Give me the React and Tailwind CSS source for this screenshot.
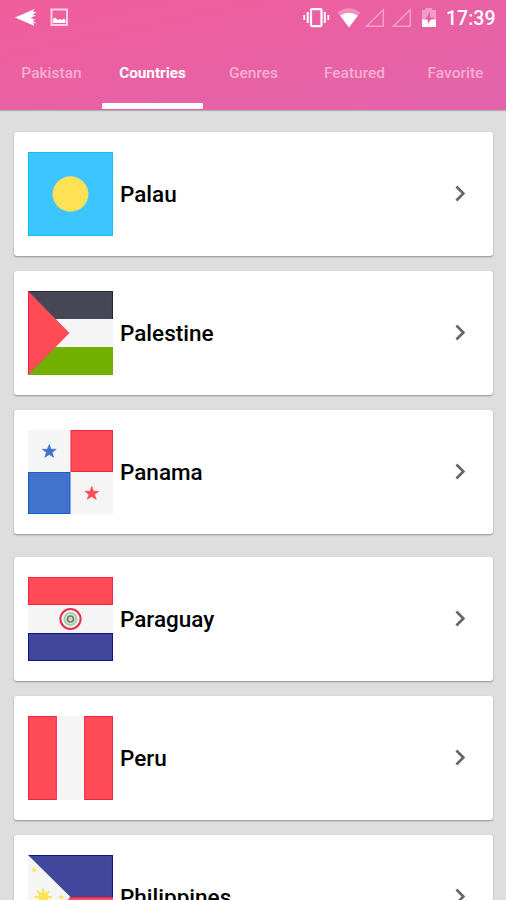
const TABS = ['Pakistan', 'Countries', 'Genres', 'Featured', 'Favorite']

const STAR = '0,-7 1.7,-2.2 6.8,-2.2 2.8,0.9 4.3,5.8 0,2.9 -4.3,5.8 -2.8,0.9 -6.8,-2.2 -1.7,-2.2'

const FLAGS = {
  palau: (
    <>
      <rect x="0.5" y="0.5" width="83" height="83" fill="#3cc5ff" stroke="#10bff8" />
      <circle cx="42" cy="42" r="17.7" fill="#ffe155" />
    </>
  ),
  palestine: (
    <>
      <rect width="84" height="84" fill="#f5f5f5" />
      <rect width="84" height="28" fill="#464655" />
      <path d="M0 .5H83.5V28" fill="none" stroke="#28243f" />
      <rect y="56" width="84" height="28" fill="#73af00" />
      <path d="M0 0L41 42L0 84Z" fill="#ff4b55" />
      <path d="M.5 0V84" stroke="#f51c45" />
    </>
  ),
  panama: (
    <>
      <rect width="84" height="84" fill="#f5f5f5" />
      <rect x="42.5" y="0.5" width="41" height="41" fill="#ff4b55" stroke="#f42248" />
      <rect x="0.5" y="42.5" width="41" height="41" fill="#4173cd" stroke="#1760c8" />
      <polygon points={STAR} transform="translate(21 21.5)" fill="#4173cd" stroke="#4173cd" strokeWidth=".7" />
      <polygon points={STAR} transform="translate(63 63.5)" fill="#ff4b55" stroke="#ff4b55" strokeWidth=".7" />
    </>
  ),
  paraguay: (
    <>
      <rect width="84" height="84" fill="#f5f5f5" />
      <rect x="0.5" y="0.5" width="83" height="27" fill="#ff4b55" stroke="#f42248" />
      <rect x="0.5" y="56.5" width="83" height="27" fill="#41479b" stroke="#101488" />
      <circle cx="42" cy="42" r="10" fill="#f5f5f5" stroke="#e8304a" strokeWidth="2" />
      <circle cx="42" cy="42" r="6" fill="#d4e8d8" stroke="#a5d3b0" strokeWidth="2" />
      <circle cx="42" cy="42" r="3" fill="#f5d76a" stroke="#65749a" strokeWidth="1.6" />
    </>
  ),
  peru: (
    <>
      <rect width="84" height="84" fill="#f5f5f5" />
      <rect x="0.5" y="0.5" width="27.5" height="83" fill="#ff4b55" stroke="#f42248" />
      <rect x="56" y="0.5" width="27.5" height="83" fill="#ff4b55" stroke="#f42248" />
    </>
  ),
  philippines: (
    <>
      <rect width="84" height="84" fill="#f5f5f5" />
      <path d="M0 0H84V42H42Z" fill="#41479b" />
      <path d="M1 .5H83.5V42" fill="none" stroke="#101488" />
      <path d="M42 42H84V84H0Z" fill="#ff4b55" />
      <path d="M41 42.5H84" stroke="#f42248" />
      <circle cx="15" cy="42" r="5" fill="#ffe155" />
      <path
        d="M15 33.5V50.5M6.5 42H23.5M9 36L21 48M21 36L9 48"
        stroke="#ffe155"
        strokeWidth="2"
      />
      <polygon points={STAR} transform="translate(6 15) scale(.43)" fill="#ffe155" />
      <polygon points={STAR} transform="translate(33 42) scale(.43)" fill="#ffe155" />
    </>
  ),
}

const COUNTRIES = [
  { name: 'Palau', flag: 'palau' },
  { name: 'Palestine', flag: 'palestine' },
  { name: 'Panama', flag: 'panama', last: true },
  { name: 'Paraguay', flag: 'paraguay' },
  { name: 'Peru', flag: 'peru' },
  { name: 'Philippines', flag: 'philippines' },
]

function StatusBar() {
  return (
    <div className="flex h-9 items-center justify-between pl-[15px] pr-[10px] text-white">
      <div className="flex items-center gap-[13px]">
        <svg width="22" height="20" viewBox="0 0 22 20" fill="currentColor">
          <path d="M0 9.5L19.5 1L18 4L21.5 4L17.5 7L21 7.5L15.5 10L21 12L17.5 12.5L21.5 15.5L18 15L19.5 18Z" />
        </svg>
        <svg width="19" height="20" viewBox="0 0 19 20">
          <rect x="1.5" y="1.5" width="15.5" height="15.5" fill="none" stroke="#ffd0e5" strokeWidth="2" />
          <path d="M3 15V11L5 9.5L8 12L10 11L12 12L14 10.5L15.5 12V15Z" fill="currentColor" />
        </svg>
      </div>
      <div className="flex items-center">
        <svg width="27" height="22" viewBox="0 0 27 22" fill="none" stroke="currentColor">
          <rect x="8" y="2.1" width="10.5" height="17" rx="1" strokeWidth="2.2" />
          <path d="M4.7 5V16M21.8 5V16" strokeWidth="2" />
          <path d="M1.2 8V13M25.3 8V13" strokeWidth="1.8" />
        </svg>
        <svg className="ml-[7px]" width="24" height="22" viewBox="0 0 24 22" fill="currentColor">
          <path d="M.5 5.5Q12 -3 23.5 5.5L12 20.5Z" opacity=".3" />
          <path d="M3.2 8.6Q12 2.8 20.8 8.6L12 20.5Z" />
        </svg>
        <svg className="ml-[4px]" width="20" height="22" viewBox="0 0 20 22" fill="none">
          <path d="M1.5 19.2L18.3 2.8V19.2Z" stroke="#fff" strokeOpacity=".4" strokeWidth="1.5" />
        </svg>
        <svg className="ml-[7px]" width="20" height="22" viewBox="0 0 20 22" fill="none">
          <path d="M1.5 19.2L18.3 2.8V19.2Z" stroke="#fff" strokeOpacity=".4" strokeWidth="1.5" />
        </svg>
        <svg className="ml-[9px]" width="16" height="22" viewBox="0 0 16 22">
          <path
            d="M1 3H4.5V1H11V3H15V13H1ZM9 5L3.5 13H12L13 10.5H9Z"
            fill="#fff"
            fillOpacity=".38"
            fillRule="evenodd"
          />
          <path d="M1 12.5H6.8V17L10 12.5H15V20H1Z" fill="#fff" />
        </svg>
        <span className="ml-[9px] w-[50px] whitespace-nowrap pt-[1px] text-[19.5px] font-medium leading-9">17:39</span>
      </div>
    </div>
  )
}

function TabBar({ active }) {
  return (
    <nav className="grid h-[74px] grid-cols-5 pl-[1px]">
      {TABS.map((tab) => (
        <div key={tab} className="flex flex-col items-center justify-between">
          <span
            className={`pt-[25px] leading-6 ${
              tab === active ? 'text-[15.3px] font-bold text-white' : 'text-[15.5px] font-medium text-[#f8aed1]'
            }`}
          >
            {tab}
          </span>
          {tab === active && <div className="mb-[1px] h-[6px] w-full rounded-[1px] bg-white" />}
        </div>
      ))}
    </nav>
  )
}

function CountryCard({ country }) {
  return (
    <li
      className={`flex h-[124px] shrink-0 items-center rounded-[3px] bg-white pl-3.5 pr-[25px] shadow-[0_1px_2px_rgba(0,0,0,0.35)] ${
        country.last ? 'mb-2' : ''
      }`}
    >
      <svg width="85" height="84" viewBox="0 0 84 84" preserveAspectRatio="none" className="mb-[1px] shrink-0">
        {FLAGS[country.flag]}
      </svg>
      <span className="ml-[7px] flex-1 pt-[2px] text-[22.5px] font-medium text-black">{country.name}</span>
      <svg width="16" height="20" viewBox="0 0 16 20" fill="none" stroke="#666" strokeWidth="2.6">
        <path d="M4.4 2.5L11.4 9.5L4.4 16.5" />
      </svg>
    </li>
  )
}

function App() {
  return (
    <div className="flex h-[900px] w-full flex-col overflow-hidden bg-[#dedede] font-['Roboto',sans-serif]">
      <header className="shrink-0 bg-gradient-to-br from-[#f05d9a] to-[#e264ad] shadow-[0_1px_1px_rgba(0,0,0,0.2)]">
        <StatusBar />
        <TabBar active="Countries" />
      </header>
      <ul className="flex flex-col gap-[15px] pl-[14px] pr-[13px] pt-[22px]">
        {COUNTRIES.map((country) => (
          <CountryCard key={country.name} country={country} />
        ))}
      </ul>
    </div>
  )
}

export default App
